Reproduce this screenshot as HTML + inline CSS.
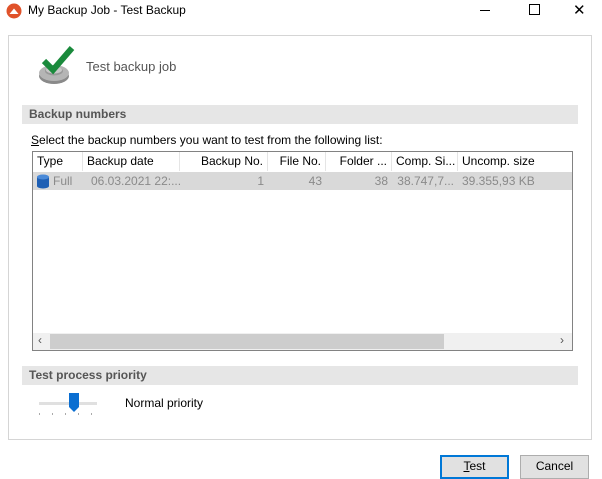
<!DOCTYPE html>
<html><head><meta charset="utf-8"><style>
body{margin:0;width:602px;height:471px;background:#fff;font-family:"Liberation Sans",sans-serif;font-size:12px;color:#000;position:relative;overflow:hidden}
.a{position:absolute}
.hdr{position:absolute;left:22px;width:556px;height:19px;background:#e6e6e6;color:#555;font-weight:bold;font-size:12px;line-height:19px;padding-left:7px;box-sizing:border-box}
.col{position:absolute;top:0;height:19px;line-height:19px;border-right:1px solid #e5e5e5;box-sizing:border-box;padding:0 4px;white-space:nowrap;overflow:hidden}
.cell{position:absolute;top:0;height:18px;line-height:18px;color:#8a8a8a;box-sizing:border-box;padding:0 4px;white-space:nowrap;overflow:hidden}
.btn{position:absolute;top:455px;height:24px;width:69px;background:#e1e1e1;border:1px solid #adadad;box-sizing:border-box;text-align:center;line-height:21px;font-size:12px}
</style></head><body>
<svg class="a" style="left:6px;top:3px" width="16" height="16"><circle cx="8" cy="8" r="7.5" fill="#e0522a"/><path d="M3.5 11 L8 5.5 L12.5 11 Z" fill="#fff"/></svg>
<div class="a" style="left:28px;top:3px;font-size:12px">My Backup Job - Test Backup</div>
<div class="a" style="left:480px;top:10px;width:10px;height:1px;background:#000"></div>
<div class="a" style="left:529px;top:4px;width:9px;height:9px;border:1px solid #000"></div>
<div class="a" style="left:573px;top:1px;font-size:15px">✕</div>
<div class="a" style="left:8px;top:35px;width:584px;height:405px;border:1px solid #d5d5d5;box-sizing:border-box"></div>
<svg class="a" style="left:36px;top:44px" width="40" height="44"><ellipse cx="18" cy="32" rx="15" ry="8" fill="#8a8a8a"/><ellipse cx="18" cy="29" rx="15" ry="8" fill="#b5b5b5"/><ellipse cx="18" cy="27" rx="9" ry="4.5" fill="#999"/><ellipse cx="18" cy="26" rx="8" ry="3.5" fill="#c8c8c8"/><path d="M8 17 L17 26 L36 4" stroke="#1a8a3c" stroke-width="6" fill="none"/></svg>
<div class="a" style="left:86px;top:59px;color:#555;font-size:13px">Test backup job</div>
<div class="hdr" style="top:105px">Backup numbers</div>
<div class="a" style="left:31px;top:133px"><u>S</u>elect the backup numbers you want to test from the following list:</div>
<div class="a" style="left:32px;top:151px;width:541px;height:200px;border:1px solid #828282;box-sizing:border-box;overflow:hidden">
 <div class="a" style="left:0;top:0;width:540px;height:19px">
  <div class="col" style="left:0;width:50px">Type</div>
  <div class="col" style="left:50px;width:97px">Backup date</div>
  <div class="col" style="left:147px;width:88px;text-align:right">Backup No.</div>
  <div class="col" style="left:235px;width:58px;text-align:right">File No.</div>
  <div class="col" style="left:293px;width:66px;text-align:right">Folder ...</div>
  <div class="col" style="left:359px;width:66px;text-align:right">Comp. Si...</div>
  <div class="col" style="left:425px;width:90px;border:none">Uncomp. size</div>
 </div>
 <div class="a" style="left:0;top:20px;width:539px;height:18px;background:#d9d9d9">
  <svg class="a" style="left:3px;top:2px" width="14" height="15"><rect x="1" y="3" width="12" height="9" fill="#1e5fb4"/><ellipse cx="7" cy="12" rx="6" ry="2.5" fill="#1e5fb4"/><ellipse cx="7" cy="3" rx="6" ry="2.5" fill="#4a8ad8"/></svg>
  <div class="cell" style="left:16px;width:34px">Full</div>
  <div class="cell" style="left:54px;width:93px">06.03.2021 22:...</div>
  <div class="cell" style="left:147px;width:88px;text-align:right">1</div>
  <div class="cell" style="left:235px;width:58px;text-align:right">43</div>
  <div class="cell" style="left:293px;width:66px;text-align:right">38</div>
  <div class="cell" style="left:359px;width:66px;text-align:right">38.747,7...</div>
  <div class="cell" style="left:425px;width:100px">39.355,93 KB</div>
 </div>
 <div class="a" style="left:0;top:181px;width:539px;height:17px;background:#f0f0f0"></div>
 <div class="a" style="left:17px;top:182px;width:394px;height:15px;background:#cdcdcd"></div>
 <div class="a" style="left:5px;top:181px;font-size:12px;color:#555">‹</div>
 <div class="a" style="left:527px;top:181px;font-size:12px;color:#555">›</div>
</div>
<div class="hdr" style="top:366px">Test process priority</div>
<div class="a" style="left:39px;top:402px;width:58px;height:3px;background:#e0e0e0"></div>
<svg class="a" style="left:68px;top:393px" width="12" height="20"><path d="M1 0 H11 V14 L6 19 L1 14 Z" fill="#0a6ed1"/></svg>
<div class="a" style="left:39px;top:413px;width:60px;height:2px;background:repeating-linear-gradient(90deg,#aaa 0 1px,transparent 1px 13px)"></div>
<div class="a" style="left:108px;top:396px;width:2px"></div>
<div class="a" style="left:125px;top:396px">Normal priority</div>
<div class="btn" style="left:440px;border:2px solid #0078d7;line-height:19px"><u>T</u>est</div>
<div class="btn" style="left:520px">Cancel</div>
</body></html>
